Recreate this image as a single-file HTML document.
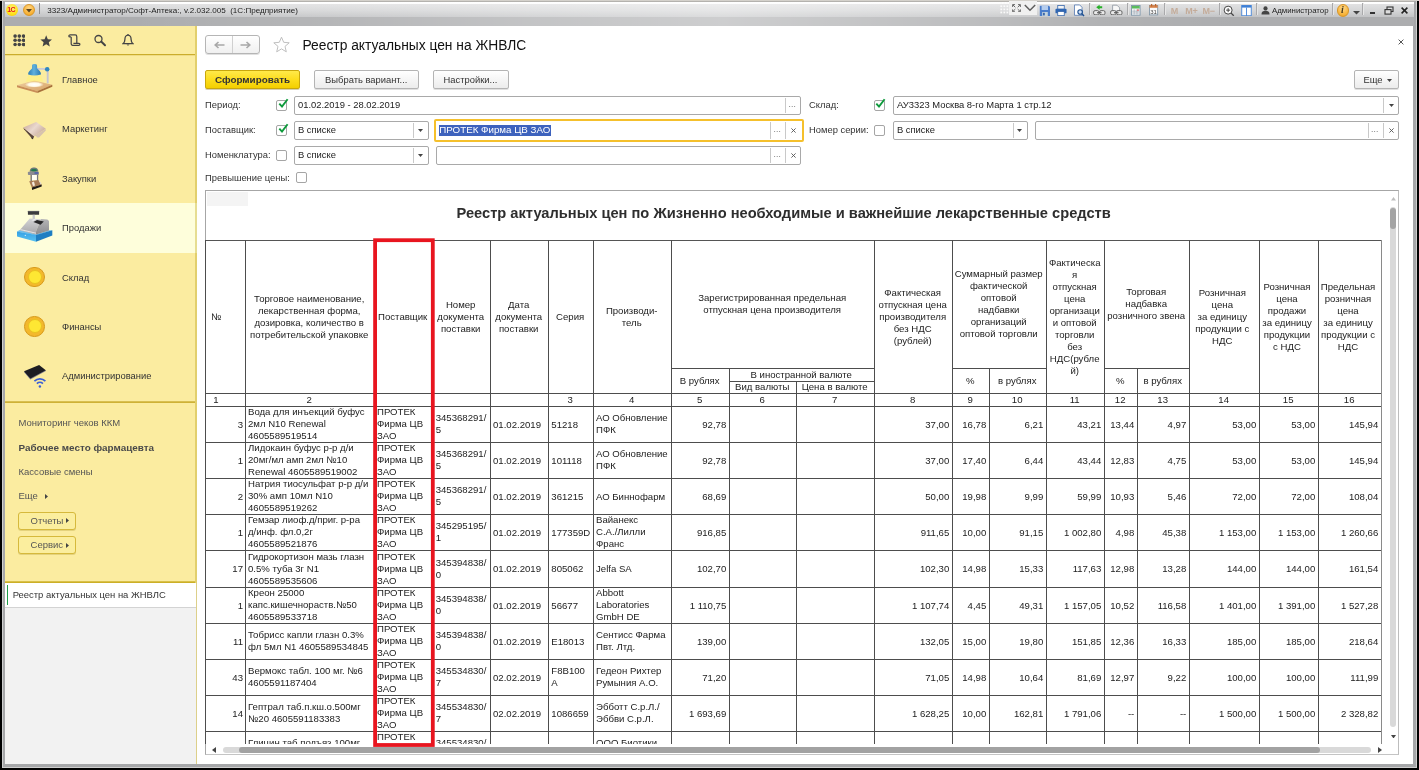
<!DOCTYPE html><html lang="ru"><head><meta charset="utf-8"><title>Реестр актуальных цен на ЖНВЛС</title><style>
*{box-sizing:border-box;margin:0;padding:0}
html,body{width:1419px;height:770px;overflow:hidden;background:#000}
html{background:linear-gradient(#d4d1cb 0,#d4d1cb 1px,#000 1px,#000 100%)}
body{filter:blur(0.4px)}
body{position:relative;font-family:"Liberation Sans",Arial,sans-serif;font-size:9.4px;color:#333;-webkit-font-smoothing:antialiased}
.a{position:absolute}
.t{position:absolute;white-space:pre;line-height:12px}
#frame{left:2px;top:0;width:1415px;height:768px;background:#a6a7a9;border:1px solid #cfcfcf;border-top:0}
#topstrip{left:0;top:0;width:1419px;height:1px;background:#d4d1cb}
#titlebar{left:5px;top:1px;width:1409px;height:25px;background:linear-gradient(#b4b2ae 0,#b4b2ae 1px,#fff 1px,#fdfdfd 3px,#e0e0e1 3.5px,#d6d7d8 9px,#c4c5c7 15.5px,#acadaf 16.5px,#acadaf 100%)}
#titleglow{left:5px;top:4px;width:1409px;height:22px;background:linear-gradient(90deg,rgba(255,255,255,0) 0,rgba(255,255,255,0) 9%,rgba(255,255,255,.12) 24%,rgba(255,255,255,.28) 37%,rgba(255,255,255,.4) 51%,rgba(255,255,255,.27) 63%,rgba(255,255,255,.19) 70%,rgba(255,255,255,.06) 78%,rgba(255,255,255,0) 88%)}
#side{left:5px;top:26px;width:192px;border-right:2px solid #e2cf6c;height:557px;background:#fbeca0}
#main{left:197px;top:26px;width:1216px;height:738px;background:#fff}
.sec{position:absolute;left:62px;font-size:9.4px;color:#333;white-space:pre;line-height:12px}
.cmd{position:absolute;left:18.5px;font-size:9.5px;color:#555;white-space:pre;line-height:12px}
.sbtn{position:absolute;left:18px;width:58px;height:18px;border:1px solid #d6b93c;border-radius:3px;background:#fbee9e;box-shadow:0 1px 0 rgba(160,130,20,.25)}
.lbl{position:absolute;font-size:9.4px;color:#333;white-space:pre;line-height:12px}
.inp{position:absolute;height:19px;border:1px solid #a9a9a9;border-radius:2px;background:#fff}
.inp .v{position:absolute;left:3px;top:2.2px;font-size:9.4px;line-height:12px;white-space:pre;color:#222}
.sepv{position:absolute;top:1px;bottom:1px;width:1px;background:#c9c9c9}
.cb{position:absolute;width:11px;height:11px;border:1px solid #a5a5a5;border-radius:2px;background:#fff}
.btn{position:absolute;height:19px;border:1px solid #b4b4b4;border-radius:2px;background:linear-gradient(#fff,#ececec);font-size:9.4px;color:#333;text-align:center;line-height:17px;white-space:pre;box-shadow:0 1px 0 rgba(0,0,0,.12)}
.hl{position:absolute;background:#333}
.c{position:absolute;font-size:9.6px;line-height:12px;color:#222;white-space:pre;display:flex;flex-direction:column;justify-content:center}
.c.ct{text-align:center;align-items:center}
.c.r{text-align:right;align-items:flex-end}
.c.l{text-align:left;align-items:flex-start}
</style></head><body>
<div class="a" id="frame"></div><div class="a" id="topstrip"></div><div class="a" id="titlebar"></div><div class="a" id="titleglow"></div>
<div class="a" id="side"></div><div class="a" id="main"></div>
<!-- title bar -->
<div class="a" style="left:6px;top:4px;width:12px;height:12px;border-radius:50%;background:radial-gradient(circle at 50% 35%,#fff27a,#ffe21a 60%,#f5c400)"></div>
<div class="t" style="left:7.2px;top:5px;font-size:7px;line-height:10px;font-weight:bold;color:#e3161b;letter-spacing:-0.6px">1С</div>
<div class="a" style="left:23px;top:4px;width:12px;height:12px;border-radius:50%;background:radial-gradient(circle at 50% 30%,#ffd684,#f8b133 70%,#e59a1b);border:0.5px solid #d9982a"></div>
<svg class="a" style="left:26px;top:8.5px" width="6" height="4" viewBox="0 0 6 4"><path d="M0 0H6L3 3.6Z" fill="#5a4520"/></svg>
<div class="a" style="left:39px;top:3px;width:1px;height:11px;background:#8e8e90"></div>
<div class="t" style="left:47.3px;top:4.5px;font-size:8.08px;color:#1c1c1c">3323/Администратор/Софт-Аптека:, v.2.032.005  (1С:Предприятие)</div>
<div class="a" style="left:1009px;top:1px;width:28px;height:14px;background:#f0f0f0"></div>
<svg class="a" style="left:1000px;top:1.6px" width="10" height="13" viewBox="0 0 10 13"><rect x="0.4" y="0.3" width="1.7" height="1.7" fill="#fafafa"/><rect x="0.4" y="3.4" width="1.7" height="1.7" fill="#fafafa"/><rect x="0.4" y="6.5" width="1.7" height="1.7" fill="#fafafa"/><rect x="0.4" y="9.600000000000001" width="1.7" height="1.7" fill="#fafafa"/><rect x="3.4499999999999997" y="0.3" width="1.7" height="1.7" fill="#fafafa"/><rect x="3.4499999999999997" y="3.4" width="1.7" height="1.7" fill="#fafafa"/><rect x="3.4499999999999997" y="6.5" width="1.7" height="1.7" fill="#fafafa"/><rect x="3.4499999999999997" y="9.600000000000001" width="1.7" height="1.7" fill="#fafafa"/><rect x="6.5" y="0.3" width="1.7" height="1.7" fill="#fafafa"/><rect x="6.5" y="3.4" width="1.7" height="1.7" fill="#fafafa"/><rect x="6.5" y="6.5" width="1.7" height="1.7" fill="#fafafa"/><rect x="6.5" y="9.600000000000001" width="1.7" height="1.7" fill="#fafafa"/></svg>
<svg class="a" style="left:1011.5px;top:3.8px" width="9" height="8.4" viewBox="0 0 9 8.4"><path d="M0.6 3V0.6H3M6 0.6H8.4V3M8.4 5.4V7.8H6M3 7.8H0.6V5.4M0.9 0.9L3.3 3.3M8.1 0.9L5.7 3.3M8.1 7.5L5.7 5.1M0.9 7.5L3.3 5.1" stroke="#6a6a6a" stroke-width="1" fill="none"/></svg>
<svg class="a" style="left:1023.7px;top:4.2px" width="12" height="7.5" viewBox="0 0 12 7.5"><path d="M0.8 1L6 6.2L11.2 1" stroke="#5e5e5e" stroke-width="1.5" fill="none"/></svg>
<svg class="a" style="left:1039px;top:4.6px" width="12" height="12" viewBox="0 0 12 12"><path d="M0.8 0.8H10L11 1.8V11H0.8Z" fill="#4a7dcb"/><rect x="2.6" y="0.8" width="6.4" height="4.2" fill="#b5cdee"/><rect x="3.2" y="7" width="5.6" height="4" fill="#c3d3dc"/><rect x="4" y="7.8" width="1.8" height="2.6" fill="#3b66aa"/></svg>
<svg class="a" style="left:1055.3px;top:4.8px" width="12" height="11.2" viewBox="0 0 13 12"><rect x="3" y="0.5" width="7" height="4" fill="#f4f4f4" stroke="#2c5fa8" stroke-width="0.8"/><rect x="0.5" y="4" width="12" height="5" rx="1" fill="#2f66b3"/><rect x="3" y="7" width="7" height="4.5" fill="#fff" stroke="#2c5fa8" stroke-width="0.8"/></svg>
<svg class="a" style="left:1073px;top:3.8px" width="12.4" height="13.2" viewBox="0 0 13 14"><path d="M1.5 1H7L9.5 3.5V12H1.5Z" fill="#fff" stroke="#5c7fb5" stroke-width="0.9"/><circle cx="7.5" cy="8.5" r="2.4" fill="#cfe0f7" stroke="#1d4f91" stroke-width="1.2"/><path d="M9.3 10.4L11.6 12.8" stroke="#1d4f91" stroke-width="1.6"/></svg>
<div class="a" style="left:1089px;top:3px;width:1px;height:12px;background:#a9a9ab"></div><div class="a" style="left:1090px;top:3px;width:1px;height:12px;background:#e6e6e6"></div>
<svg class="a" style="left:1093px;top:3.8px" width="12.6" height="11.4" viewBox="0 0 12.6 11.4"><path d="M3.2 3.3L6.6 0.8V2.3H9.2V4.3H6.6V5.8Z" fill="#27b027"/><rect x="0.6" y="6.6" width="5.4" height="4.2" rx="1.5" fill="#e9e9e9" stroke="#5a5a5a" stroke-width="0.9"/><rect x="6.6" y="6.6" width="5.4" height="4.2" rx="1.5" fill="#e9e9e9" stroke="#5a5a5a" stroke-width="0.9"/><path d="M4 8.7H8.6" stroke="#5a5a5a" stroke-width="1.1"/></svg>
<svg class="a" style="left:1110px;top:3.8px" width="12.6" height="11.4" viewBox="0 0 12.6 11.4"><path d="M2.6 1.2H7L9.6 3.8V7H2.6Z" fill="#f7f7f7" stroke="#8d95a0" stroke-width="0.8"/><rect x="0.6" y="6.6" width="5.4" height="4.2" rx="1.5" fill="#e9e9e9" stroke="#5a5a5a" stroke-width="0.9"/><rect x="6.6" y="6.6" width="5.4" height="4.2" rx="1.5" fill="#e9e9e9" stroke="#5a5a5a" stroke-width="0.9"/><path d="M4 8.7H8.6" stroke="#5a5a5a" stroke-width="1.1"/></svg>
<div class="a" style="left:1127px;top:3px;width:1px;height:12px;background:#a9a9ab"></div><div class="a" style="left:1128px;top:3px;width:1px;height:12px;background:#e6e6e6"></div>
<svg class="a" style="left:1131.3px;top:4.9px" width="9.6" height="10.7" viewBox="0 0 9.6 10.7"><rect x="0.5" y="0.5" width="8.6" height="9.7" fill="#f2f5f7" stroke="#7f97aa" stroke-width="0.9"/><rect x="0.9" y="0.9" width="7.8" height="2.6" fill="#5cbd5c"/><path d="M3.2 4.4V9.6M6 4.4V9.6M1.2 6.2H8.4M1.2 8H8.4" stroke="#a3adb5" stroke-width="0.7"/><rect x="6.3" y="4.3" width="1.4" height="1.6" fill="#e45a5a"/></svg>
<svg class="a" style="left:1149.2px;top:4.2px" width="9.4" height="11.4" viewBox="0 0 9.4 11.4"><rect x="0.5" y="1.5" width="8.2" height="9.4" fill="#fbfbfb" stroke="#8397a8" stroke-width="0.9"/><rect x="0.5" y="1.2" width="8.2" height="2.6" fill="#d8834a"/><rect x="2" y="0" width="1.2" height="2.4" fill="#b9662f"/><rect x="6" y="0" width="1.2" height="2.4" fill="#b9662f"/><text x="4.6" y="9.8" font-size="6" text-anchor="middle" fill="#444" font-family="Liberation Sans">31</text></svg>
<div class="a" style="left:1164px;top:3px;width:1px;height:12px;background:#a9a9ab"></div><div class="a" style="left:1165px;top:3px;width:1px;height:12px;background:#e6e6e6"></div>
<div class="t" style="left:1170.7px;top:4.5px;font-size:9px;font-weight:bold;color:#c4ac9a;letter-spacing:-0.3px">M</div>
<div class="t" style="left:1185.2px;top:4.5px;font-size:9px;font-weight:bold;color:#c4ac9a;letter-spacing:-0.3px">M+</div>
<div class="t" style="left:1202.6px;top:4.5px;font-size:9px;font-weight:bold;color:#c4ac9a;letter-spacing:-0.3px">M−</div>
<div class="a" style="left:1219px;top:3px;width:1px;height:12px;background:#a9a9ab"></div><div class="a" style="left:1220px;top:3px;width:1px;height:12px;background:#e6e6e6"></div>
<svg class="a" style="left:1223.3px;top:4.8px" width="11.6" height="11.6" viewBox="0 0 14 14"><circle cx="6.2" cy="6.2" r="4.8" fill="#fff" stroke="#444" stroke-width="1.2"/><path d="M3.8 6.2H8.6M6.2 3.8V8.6" stroke="#444" stroke-width="1.2"/><path d="M9.8 9.8L13 13" stroke="#444" stroke-width="1.6"/></svg>
<svg class="a" style="left:1241px;top:4.6px" width="11" height="11.2" viewBox="0 0 12 13"><rect x="0.5" y="0.5" width="11" height="12" fill="#fff" stroke="#3d7fd6" stroke-width="1"/><rect x="0.5" y="0.5" width="11" height="2.5" fill="#3d7fd6"/><path d="M6 3V12.5" stroke="#3d7fd6" stroke-width="1"/></svg>
<div class="a" style="left:1256px;top:3px;width:1px;height:12px;background:#a9a9ab"></div><div class="a" style="left:1257px;top:3px;width:1px;height:12px;background:#e6e6e6"></div>
<svg class="a" style="left:1261px;top:6px" width="9" height="9" viewBox="0 0 9 9"><circle cx="4.5" cy="2.4" r="2.1" fill="#444"/><path d="M0.5 8.5C0.5 5.5 2.2 4.8 4.5 4.8S8.5 5.5 8.5 8.5Z" fill="#444"/></svg>
<div class="t" style="left:1272px;top:4.5px;font-size:7.85px;color:#222">Администратор</div>
<div class="a" style="left:1332px;top:3px;width:1px;height:12px;background:#a9a9ab"></div><div class="a" style="left:1333px;top:3px;width:1px;height:12px;background:#e6e6e6"></div>
<div class="a" style="left:1336.5px;top:4px;width:12.5px;height:12.5px;border-radius:50%;background:radial-gradient(circle at 50% 30%,#ffd98a,#f7b236 70%,#e39a1d);border:0.5px solid #d8962a"></div>
<div class="t" style="left:1341px;top:4px;font-size:10px;font-weight:bold;font-style:italic;color:#4a3a1c;font-family:'Liberation Serif',serif">i</div>
<svg class="a" style="left:1353px;top:11px" width="7" height="4" viewBox="0 0 7 4"><path d="M0 0H7L3.5 3.5Z" fill="#444"/></svg>
<div class="a" style="left:1362px;top:3px;width:1px;height:12px;background:#a9a9ab"></div><div class="a" style="left:1363px;top:3px;width:1px;height:12px;background:#e6e6e6"></div>
<div class="a" style="left:1369.5px;top:12.3px;width:5px;height:1.6px;background:#333"></div>
<svg class="a" style="left:1383.5px;top:5.5px" width="10" height="9" viewBox="0 0 10 9"><rect x="3" y="1" width="6" height="4.5" fill="none" stroke="#333" stroke-width="1.1"/><rect x="1" y="3.6" width="6" height="4.5" fill="#ddd" stroke="#333" stroke-width="1.1"/></svg>
<svg class="a" style="left:1401px;top:7px" width="7" height="7" viewBox="0 0 7 7"><path d="M0.6 0.6L6.4 6.4M6.4 0.6L0.6 6.4" stroke="#222" stroke-width="1.5"/></svg>
<!-- sidebar -->
<svg class="a" style="left:12.7px;top:34.1px" width="12.6" height="12.6" viewBox="0 0 12.6 12.6"><circle cx="2.1" cy="2.1" r="1.8" fill="#454545"/><circle cx="2.1" cy="6.300000000000001" r="1.8" fill="#454545"/><circle cx="2.1" cy="10.5" r="1.8" fill="#454545"/><circle cx="6.300000000000001" cy="2.1" r="1.8" fill="#454545"/><circle cx="6.300000000000001" cy="6.300000000000001" r="1.8" fill="#454545"/><circle cx="6.300000000000001" cy="10.5" r="1.8" fill="#454545"/><circle cx="10.5" cy="2.1" r="1.8" fill="#454545"/><circle cx="10.5" cy="6.300000000000001" r="1.8" fill="#454545"/><circle cx="10.5" cy="10.5" r="1.8" fill="#454545"/></svg>
<svg class="a" style="left:39.9px;top:34.9px" width="12.4" height="11.8" viewBox="0 0 12 11.8"><path d="M6 0.3L7.6 4.3L11.8 4.6L8.6 7.3L9.6 11.5L6 9.2L2.4 11.5L3.4 7.3L0.2 4.6L4.4 4.3Z" fill="#454545"/></svg>
<svg class="a" style="left:67.8px;top:34px" width="13" height="12.4" viewBox="0 0 13 12.4"><path d="M1.6 1H7.2C8.4 1 8.8 1.8 8.8 2.8V9.3M3.2 3V9.8C3.2 10.9 3.8 11.4 4.8 11.4H10.4C11.5 11.4 11.9 10.8 11.9 10.2C11.9 9.6 11.5 9.3 10.9 9.3H5.4M1.6 1C0.6 1.3 0.6 3 1.8 3H3.2" stroke="#454545" stroke-width="1.25" fill="none"/></svg>
<svg class="a" style="left:94.4px;top:34.4px" width="13" height="13" viewBox="0 0 13 13"><circle cx="4.5" cy="5" r="3.5" fill="none" stroke="#454545" stroke-width="1.3"/><path d="M7.2 7.6L11 11.2" stroke="#454545" stroke-width="2" stroke-linecap="round"/></svg>
<svg class="a" style="left:122px;top:33.8px" width="12" height="13" viewBox="0 0 12 13"><path d="M6 1.2C3.6 1.2 2.9 3.2 2.9 5.4C2.9 7.6 2 8.8 1 9.7H11C10 8.8 9.1 7.6 9.1 5.4C9.1 3.2 8.4 1.2 6 1.2Z" fill="none" stroke="#454545" stroke-width="1.3"/><path d="M4.6 10.6A1.5 1.5 0 0 0 7.4 10.6Z" fill="#454545"/><rect x="5.4" y="0" width="1.2" height="1.6" fill="#454545"/></svg>
<div class="a" style="left:5px;top:54px;width:190px;height:1px;background:#cbad2c"></div><div class="a" style="left:5px;top:55px;width:190px;height:1px;background:#efdc86"></div>
<div class="a" style="left:5px;top:203px;width:190px;height:50px;background:#fefedb"></div><div class="a" style="left:195px;top:203px;width:2px;height:50px;background:#e6dd92"></div>
<div class="sec" style="top:73.9px">Главное</div>
<div class="sec" style="top:123.3px">Маркетинг</div>
<div class="sec" style="top:172.6px">Закупки</div>
<div class="sec" style="top:222.3px">Продажи</div>
<div class="sec" style="top:271.6px">Склад</div>
<div class="sec" style="top:321.1px">Финансы</div>
<div class="sec" style="top:370.3px">Администрирование</div>
<svg class="a" style="left:10px;top:58px" width="60" height="40" viewBox="0 0 60 40"><defs><linearGradient id="wd" x1="0" y1="0" x2="1" y2="1"><stop offset="0" stop-color="#efcf9f"/><stop offset="1" stop-color="#d6a267"/></linearGradient>
<linearGradient id="lh" x1="0" y1="0" x2="1" y2="0"><stop offset="0" stop-color="#2d7db6"/><stop offset=".45" stop-color="#5fb0dc"/><stop offset="1" stop-color="#2a78b0"/></linearGradient>
<radialGradient id="pp" cx=".5" cy=".5" r=".5"><stop offset="0" stop-color="#fff"/><stop offset=".6" stop-color="#fffbe8"/><stop offset="1" stop-color="#fffbe8" stop-opacity="0"/></radialGradient></defs>
<path d="M7 27.3L24.4 22.6L42.3 26.8L27.5 33Z" fill="url(#wd)"/><path d="M7 27.3L27.5 33V34.9L7 29.2Z" fill="#c98d58"/><path d="M27.5 33L42.3 26.8V28.7L27.5 34.9Z" fill="#a8703b"/>
<ellipse cx="24.3" cy="26.6" rx="9.5" ry="3" fill="url(#pp)"/>
<path d="M18.2 17.3H30.9L33.2 23.6H15.8Z" fill="#fff27a" opacity=".6"/>
<path d="M27 10.9H36.6" stroke="#c9c9d8" stroke-width="1.7"/><path d="M37.7 12.5V25.3" stroke="#c4c4d0" stroke-width="1.9"/><circle cx="37.2" cy="11.2" r="2.25" fill="#2f86c0"/>
<path d="M22.1 7.2Q22.1 6.1 24.5 6Q27 6.1 27 7.2L27.2 10.4C29 12 30.9 13.4 30.9 15.6V16.6Q24.5 18.6 18.2 16.6V15.6C18.2 13.4 20.4 12 22 10.4Z" fill="url(#lh)"/></svg>
<svg class="a" style="left:10px;top:112px" width="60" height="40" viewBox="0 0 60 40"><defs><linearGradient id="mk" x1="0" y1="0" x2="1" y2="0.6"><stop offset="0" stop-color="#c6a493"/><stop offset=".55" stop-color="#ead9cf"/><stop offset="1" stop-color="#c9ac9c"/></linearGradient></defs>
<path d="M13.2 15.6L14 17.3L21.8 26.2L22.9 27L24.2 24.6Z" fill="#5a463d"/>
<path d="M23.9 24L35.8 17V18.4L29.1 25.5H27L26 23.9Z" fill="#d6c2ae"/>
<path d="M13.2 15.6L26.2 9.9L35.8 16.8L23.9 24.2Z" fill="url(#mk)"/>
<path d="M21.6 25.2L23.4 26.9L22.7 27.3L21.4 26.2Z" fill="#222"/></svg>
<svg class="a" style="left:10px;top:160px" width="60" height="40" viewBox="0 0 60 40"><path d="M19.7 11.8C19.7 8.6 21.6 7.6 24 7.6S28.3 8.6 28.3 11.8Z" fill="#6c7a78"/><ellipse cx="24" cy="10.3" rx="2.9" ry="1.3" fill="#1f7a4f"/>
<rect x="17.9" y="11.7" width="11" height="3.3" rx="0.8" fill="#8b8b92"/><rect x="24.5" y="12.2" width="3.8" height="1.6" fill="#4a5fb0"/>
<rect x="20.5" y="15" width="1.4" height="6" fill="#77777f"/><rect x="26.8" y="15" width="1.4" height="6" fill="#77777f"/><rect x="22" y="15" width="4.8" height="5.4" fill="#fffef6"/>
<path d="M19.2 21.2L28.5 20L31.7 24.4L21.8 27.6Z" fill="#a77a55"/><path d="M21.8 22.6L24 21.4L25 25.4L23 26Z" fill="#f3e9dc"/><path d="M28.6 20.2L29.6 20.6L31.6 24.2L30.6 24.4Z" fill="#e8e4dc"/>
<path d="M21.8 27.6L31.7 24.4V26.6L22.1 30Z" fill="#1f1a17"/></svg>
<svg class="a" style="left:10px;top:206px" width="60" height="40" viewBox="0 0 60 40"><defs><linearGradient id="cr" x1="0" y1="0" x2="0" y2="1"><stop offset="0" stop-color="#d4d4d6"/><stop offset="1" stop-color="#a5a5a8"/></linearGradient><linearGradient id="cs" x1="0" y1="0" x2="0" y2="1"><stop offset="0" stop-color="#b4b4b6"/><stop offset="1" stop-color="#8b8b8e"/></linearGradient>
<linearGradient id="bl" x1="0" y1="0" x2="0" y2="1"><stop offset="0" stop-color="#35a0e4"/><stop offset="1" stop-color="#58c2f1"/></linearGradient></defs>
<rect x="17.9" y="4.9" width="11.2" height="3.9" rx="0.5" fill="#3b3b3e"/><rect x="17.9" y="4.9" width="11.2" height="1" fill="#5a5a5e"/><rect x="22.6" y="8.8" width="2.3" height="4.6" fill="#c9c9cc"/>
<path d="M7 25.5L9.9 24L26 28.3L39 24.2L42.3 24.2L26 29.4Z" fill="#6cc0f0"/>
<path d="M7 25.5L26 29.1V35.8L7 30.6Z" fill="url(#bl)"/><path d="M26 29.1L42.3 24.2V29.6L26 35.8Z" fill="#1e7ec2"/><circle cx="15.3" cy="29.4" r="0.6" fill="#d9eefb"/>
<path d="M9.9 23.9L19.7 12.5L31.2 13.3L26 25.2L26 28.6L9.9 24.6Z" fill="url(#cr)"/><path d="M31.2 13.1L37.4 13.5L39 15.1V24.4L26 28.6V25.2Z" fill="url(#cs)"/>
<path d="M10.4 23.6L26 27.2" stroke="#e9e9eb" stroke-width="0.9"/>
<path d="M23.4 16.1L27 14L33.8 15.6L30.6 18.7Z" fill="#28282a"/><path d="M21.5 14.2L24.5 12.9L26.5 13.2L23.4 14.8Z" fill="#ececee"/></svg>
<div class="a" style="left:24.4px;top:266.9px;width:20.6px;height:20.6px;border-radius:50%;background:#f3b82c;border:0.6px solid #d79a1c"></div>
<div class="a" style="left:27.7px;top:270.2px;width:14px;height:14px;border-radius:50%;background:#fee733;border:0.6px solid #e9c11f"></div>
<div class="a" style="left:24.4px;top:316.1px;width:20.6px;height:20.6px;border-radius:50%;background:#f3b82c;border:0.6px solid #d79a1c"></div>
<div class="a" style="left:27.7px;top:319.4px;width:14px;height:14px;border-radius:50%;background:#fee733;border:0.6px solid #e9c11f"></div>
<svg class="a" style="left:10px;top:356px" width="60" height="40" viewBox="0 0 60 40"><path d="M14 16.1L20.3 23.4L35.8 15.1L35.8 14.3Z" fill="#7b7c8e"/><path d="M14 15.3L29.1 9.1L35.8 14.3L20.3 22.6Z" fill="#1d1d22"/>
<path d="M24.4 25.1A7.8 7.8 0 0 1 35.4 25.1" stroke="#3c5fd6" stroke-width="1.7" fill="none"/><path d="M26.9 27.6A4.3 4.3 0 0 1 32.9 27.6" stroke="#3c5fd6" stroke-width="1.7" fill="none"/><circle cx="29.9" cy="30.5" r="1.2" fill="#3c5fd6"/></svg>
<div class="a" style="left:5px;top:401px;width:190px;height:1px;background:#d8bf52"></div><div class="a" style="left:5px;top:402px;width:190px;height:1px;background:#ceb136"></div>
<div class="cmd" style="top:417.2px">Мониторинг чеков ККМ</div>
<div class="cmd" style="top:441.5px;font-weight:bold;font-size:9.9px;color:#4a4a4a">Рабочее место фармацевта</div>
<div class="cmd" style="top:465.8px">Кассовые смены</div>
<div class="cmd" style="top:490px">Еще</div>
<svg class="a" style="left:44.5px;top:493.5px" width="3" height="5" viewBox="0 0 3 5"><path d="M0 0L3 2.5L0 5Z" fill="#444"/></svg>
<div class="sbtn" style="top:511.5px"></div>
<div class="cmd" style="left:30.6px;top:514.5px">Отчеты</div>
<svg class="a" style="left:66.3px;top:518.0px" width="3" height="5" viewBox="0 0 3 5"><path d="M0 0L3 2.5L0 5Z" fill="#444"/></svg>
<div class="sbtn" style="top:536px"></div>
<div class="cmd" style="left:30.6px;top:539.0px">Сервис</div>
<svg class="a" style="left:66.3px;top:542.5px" width="3" height="5" viewBox="0 0 3 5"><path d="M0 0L3 2.5L0 5Z" fill="#444"/></svg>
<div class="a" style="left:5px;top:581px;width:190px;height:2px;background:linear-gradient(#e0c95c,#c5a614)"></div>
<div class="a" style="left:5px;top:583px;width:192px;height:181px;background:#f2f2f2;border-right:1px solid #ddd08a"></div>
<div class="a" style="left:5px;top:583px;width:191px;height:25px;background:#fff;border-bottom:1px solid #d3d3d3"></div>
<div class="a" style="left:6.5px;top:585px;width:1.5px;height:20px;background:#1e9e4a"></div>
<div class="t" style="left:12.7px;top:589.3px;font-size:9.45px;color:#333">Реестр актуальных цен на ЖНВЛС</div>
<!-- main header -->
<div class="a" style="left:205px;top:35px;width:55px;height:18.5px;border:1px solid #b5b5b5;border-radius:3px;background:linear-gradient(#fff,#f0f0f0);box-shadow:0 1px 0 rgba(0,0,0,.12)"></div>
<div class="a" style="left:232px;top:36px;width:1px;height:16.5px;background:#d0d0d0"></div>
<svg class="a" style="left:213.5px;top:40.5px" width="11" height="8" viewBox="0 0 11 8"><path d="M10.5 4H1.5M4.5 1L1.2 4L4.5 7" stroke="#a8a8a8" stroke-width="1.6" fill="none"/></svg>
<svg class="a" style="left:240px;top:40.5px" width="11" height="8" viewBox="0 0 11 8"><path d="M0.5 4H9.5M6.5 1L9.8 4L6.5 7" stroke="#a8a8a8" stroke-width="1.6" fill="none"/></svg>
<svg class="a" style="left:273px;top:36px" width="17" height="17" viewBox="0 0 17 17"><path d="M8.5 1.2L10.7 6.3L16.2 6.8L12 10.4L13.3 15.8L8.5 12.9L3.7 15.8L5 10.4L0.8 6.8L6.3 6.3Z" fill="#fff" stroke="#b9b9b9" stroke-width="0.9"/></svg>
<div class="t" style="left:302.5px;top:36.5px;font-size:13.8px;line-height:17px;color:#111">Реестр актуальных цен на ЖНВЛС</div>
<svg class="a" style="left:1397.5px;top:39.2px" width="6" height="6" viewBox="0 0 6 6"><path d="M0.6 0.6L5.4 5.4M5.4 0.6L0.6 5.4" stroke="#555" stroke-width="1"/></svg>
<div class="btn" style="left:205px;top:70px;width:95px;border-color:#c9a70c;background:linear-gradient(#ffe94a,#fcdc1a 55%,#f3cf00);font-weight:bold;color:#333;font-size:9.9px;box-shadow:0 1px 0 rgba(120,100,0,.3)">Сформировать</div>
<div class="btn" style="left:314px;top:70px;width:104.5px">Выбрать вариант...</div>
<div class="btn" style="left:432.5px;top:70px;width:76px">Настройки...</div>
<div class="btn" style="left:1354px;top:70px;width:45px;text-align:left;padding-left:8.5px">Еще</div>
<svg class="a" style="left:1387px;top:78.5px" width="5" height="3" viewBox="0 0 5 3"><path d="M0 0H5L2.5 3Z" fill="#444"/></svg>
<div class="lbl" style="left:205px;top:99px">Период:</div>
<div class="cb" style="left:276px;top:99.5px"></div>
<svg class="a" style="left:277.5px;top:98.0px" width="11" height="11" viewBox="0 0 11 11"><path d="M1.3 5.6L4 8.6L9.6 1.2" stroke="#0e9a3c" stroke-width="1.9" fill="none"/></svg>
<div class="inp" style="left:294px;top:96px;width:507px;"><span class="v">01.02.2019 - 28.02.2019</span><span class="sepv" style="left:490px"></span></div>
<div class="t" style="left:788.5px;top:98.0px;font-size:8.5px;color:#777;letter-spacing:0.2px">...</div>
<div class="lbl" style="left:809px;top:99px">Склад:</div>
<div class="cb" style="left:873.5px;top:99.5px"></div>
<svg class="a" style="left:875.0px;top:98.0px" width="11" height="11" viewBox="0 0 11 11"><path d="M1.3 5.6L4 8.6L9.6 1.2" stroke="#0e9a3c" stroke-width="1.9" fill="none"/></svg>
<div class="inp" style="left:893px;top:96px;width:506px;"><span class="v">АУ3323 Москва 8-го Марта 1 стр.12</span><span class="sepv" style="left:489px"></span></div>
<svg class="a" style="left:1388.5px;top:104.0px" width="5" height="3" viewBox="0 0 5 3"><path d="M0 0H5L2.5 3Z" fill="#444"/></svg>
<div class="lbl" style="left:205px;top:124px">Поставщик:</div>
<div class="cb" style="left:276px;top:124.5px"></div>
<svg class="a" style="left:277.5px;top:123.0px" width="11" height="11" viewBox="0 0 11 11"><path d="M1.3 5.6L4 8.6L9.6 1.2" stroke="#0e9a3c" stroke-width="1.9" fill="none"/></svg>
<div class="inp" style="left:294px;top:121px;width:134.5px;"><span class="v">В списке</span><span class="sepv" style="left:118px"></span></div>
<svg class="a" style="left:418.0px;top:129.0px" width="5" height="3" viewBox="0 0 5 3"><path d="M0 0H5L2.5 3Z" fill="#444"/></svg>
<div class="a" style="left:434px;top:119px;width:370px;height:23px;border:2px solid #f5c02c;border-radius:2px;background:#fff"></div>
<div class="a" style="left:770px;top:122px;width:1px;height:17px;background:#c9c9c9"></div><div class="a" style="left:785px;top:122px;width:1px;height:17px;background:#c9c9c9"></div>
<div class="a" style="left:438.6px;top:125px;width:112.5px;height:11px;background:#3d62bd"></div>
<div class="t" style="left:439.3px;top:124.3px;font-size:9.75px;color:#fff">ПРОТЕК Фирма ЦВ ЗАО</div>
<div class="t" style="left:773.5px;top:123.0px;font-size:8.5px;color:#777;letter-spacing:0.2px">...</div>
<svg class="a" style="left:790.5px;top:128.0px" width="5" height="5" viewBox="0 0 5 5"><path d="M0.4 0.4L4.6 4.6M4.6 0.4L0.4 4.6" stroke="#555" stroke-width="0.9"/></svg>
<div class="lbl" style="left:809px;top:124px">Номер серии:</div>
<div class="cb" style="left:873.5px;top:124.5px"></div>
<div class="inp" style="left:893px;top:121px;width:134.5px;"><span class="v">В списке</span><span class="sepv" style="left:118.5px"></span></div>
<svg class="a" style="left:1017.0px;top:129.0px" width="5" height="3" viewBox="0 0 5 3"><path d="M0 0H5L2.5 3Z" fill="#444"/></svg>
<div class="inp" style="left:1034.5px;top:121px;width:364.5px;"><span class="sepv" style="left:332.0px"></span><span class="sepv" style="left:347.5px"></span></div>
<div class="t" style="left:1371.0px;top:123.0px;font-size:8.5px;color:#777;letter-spacing:0.2px">...</div>
<svg class="a" style="left:1388.5px;top:128.0px" width="5" height="5" viewBox="0 0 5 5"><path d="M0.4 0.4L4.6 4.6M4.6 0.4L0.4 4.6" stroke="#555" stroke-width="0.9"/></svg>
<div class="lbl" style="left:205px;top:149px">Номенклатура:</div>
<div class="cb" style="left:276px;top:149.5px"></div>
<div class="inp" style="left:294px;top:146px;width:134.5px;"><span class="v">В списке</span><span class="sepv" style="left:118px"></span></div>
<svg class="a" style="left:418.0px;top:154.0px" width="5" height="3" viewBox="0 0 5 3"><path d="M0 0H5L2.5 3Z" fill="#444"/></svg>
<div class="inp" style="left:436px;top:146px;width:365px;"><span class="sepv" style="left:333px"></span><span class="sepv" style="left:348px"></span></div>
<div class="t" style="left:773.5px;top:148.0px;font-size:8.5px;color:#777;letter-spacing:0.2px">...</div>
<svg class="a" style="left:790.5px;top:153.0px" width="5" height="5" viewBox="0 0 5 5"><path d="M0.4 0.4L4.6 4.6M4.6 0.4L0.4 4.6" stroke="#555" stroke-width="0.9"/></svg>
<div class="lbl" style="left:205px;top:171.5px">Превышение цены:</div>
<div class="cb" style="left:295.5px;top:172px"></div>
<!-- spreadsheet -->
<div class="a" style="left:205px;top:190px;width:1194px;height:565px;border:1px solid #a6a6a6;border-right-color:#bdbdbd;border-bottom-color:#c4c4c4;background:#fff"></div>
<div class="a" style="left:207px;top:192px;width:41px;height:13.5px;background:#f4f4f4"></div>
<div class="t" style="left:456.5px;top:204px;font-size:14.67px;line-height:18px;font-weight:bold;color:#2e2e2e">Реестр актуальных цен по Жизненно необходимые и важнейшие лекарственные средств</div>
<div class="a" id="grid" style="left:205px;top:236px;width:1180px;height:508px;overflow:hidden">
<i class="hl" style="left:0px;top:4px;width:1177px;height:1px;background:#555"></i>
<i class="hl" style="left:0px;top:157px;width:1177px;height:1px;background:#4d4d4d"></i>
<i class="hl" style="left:0px;top:170px;width:1177px;height:1px;background:#4d4d4d"></i>
<i class="hl" style="left:0px;top:206px;width:1177px;height:1px;background:#4d4d4d"></i>
<i class="hl" style="left:0px;top:242px;width:1177px;height:1px;background:#4d4d4d"></i>
<i class="hl" style="left:0px;top:278px;width:1177px;height:1px;background:#4d4d4d"></i>
<i class="hl" style="left:0px;top:314px;width:1177px;height:1px;background:#4d4d4d"></i>
<i class="hl" style="left:0px;top:351px;width:1177px;height:1px;background:#4d4d4d"></i>
<i class="hl" style="left:0px;top:387px;width:1177px;height:1px;background:#4d4d4d"></i>
<i class="hl" style="left:0px;top:423px;width:1177px;height:1px;background:#4d4d4d"></i>
<i class="hl" style="left:0px;top:459px;width:1177px;height:1px;background:#4d4d4d"></i>
<i class="hl" style="left:0px;top:495px;width:1177px;height:1px;background:#4d4d4d"></i>
<i class="hl" style="left:0px;top:531px;width:1177px;height:1px;background:#4d4d4d"></i>
<i class="hl" style="left:466px;top:132px;width:204px;height:1px;background:#4d4d4d"></i>
<i class="hl" style="left:524px;top:145px;width:146px;height:1px;background:#4d4d4d"></i>
<i class="hl" style="left:747px;top:132px;width:95px;height:1px;background:#4d4d4d"></i>
<i class="hl" style="left:899px;top:132px;width:86px;height:1px;background:#4d4d4d"></i>
<i class="hl" style="left:0px;top:4px;width:1px;height:541px;background:#4d4d4d"></i>
<i class="hl" style="left:40px;top:4px;width:1px;height:541px;background:#4d4d4d"></i>
<i class="hl" style="left:169px;top:4px;width:1px;height:541px;background:#4d4d4d"></i>
<i class="hl" style="left:227px;top:4px;width:1px;height:541px;background:#4d4d4d"></i>
<i class="hl" style="left:285px;top:4px;width:1px;height:541px;background:#4d4d4d"></i>
<i class="hl" style="left:343px;top:4px;width:1px;height:541px;background:#4d4d4d"></i>
<i class="hl" style="left:388px;top:4px;width:1px;height:541px;background:#4d4d4d"></i>
<i class="hl" style="left:466px;top:4px;width:1px;height:541px;background:#4d4d4d"></i>
<i class="hl" style="left:669px;top:4px;width:1px;height:541px;background:#4d4d4d"></i>
<i class="hl" style="left:747px;top:4px;width:1px;height:541px;background:#4d4d4d"></i>
<i class="hl" style="left:841px;top:4px;width:1px;height:541px;background:#4d4d4d"></i>
<i class="hl" style="left:899px;top:4px;width:1px;height:541px;background:#4d4d4d"></i>
<i class="hl" style="left:984px;top:4px;width:1px;height:541px;background:#4d4d4d"></i>
<i class="hl" style="left:1054px;top:4px;width:1px;height:541px;background:#4d4d4d"></i>
<i class="hl" style="left:1113px;top:4px;width:1px;height:541px;background:#4d4d4d"></i>
<i class="hl" style="left:1176px;top:4px;width:1px;height:541px;background:#8a8a8a"></i>
<i class="hl" style="left:524px;top:132px;width:1px;height:413px;background:#4d4d4d"></i>
<i class="hl" style="left:591px;top:145px;width:1px;height:400px;background:#4d4d4d"></i>
<i class="hl" style="left:784px;top:132px;width:1px;height:413px;background:#4d4d4d"></i>
<i class="hl" style="left:932px;top:132px;width:1px;height:413px;background:#4d4d4d"></i>
<div class="c l" style="left:6px;top:4.5px;width:29px;height:152px">№</div>
<div class="c ct" style="left:42.19999999999999px;top:4.5px;width:124.0px;height:152px">Торговое наименование,
лекарственная форма,
дозировка, количество в
потребительской упаковке</div>
<div class="c ct" style="left:171.2px;top:4.5px;width:53.0px;height:152px">Поставщик</div>
<div class="c ct" style="left:229.2px;top:4.5px;width:53.0px;height:152px">Номер
документа
поставки</div>
<div class="c ct" style="left:287.2px;top:4.5px;width:53.00000000000006px;height:152px">Дата
документа
поставки</div>
<div class="c ct" style="left:345.20000000000005px;top:4.5px;width:40.0px;height:152px">Серия</div>
<div class="c ct" style="left:390.20000000000005px;top:4.5px;width:73.0px;height:152px">Производи-
тель</div>
<div class="c ct" style="left:468.20000000000005px;top:4.5px;width:198.0px;height:127px">Зарегистрированная предельная
отпускная цена производителя</div>
<div class="c ct" style="left:468.20000000000005px;top:132.5px;width:53.0px;height:24px">В рублях</div>
<div class="c ct" style="left:526.2px;top:132.5px;width:140.0px;height:12px">В иностранной валюте</div>
<div class="c ct" style="left:526.2px;top:145.5px;width:62.0px;height:11px">Вид валюты</div>
<div class="c ct" style="left:593.2px;top:145.5px;width:73.0px;height:11px">Цена в валюте</div>
<div class="c ct" style="left:671.2px;top:4.5px;width:73.0px;height:152px">Фактическая
отпускная цена
производителя
без НДС
(рублей)</div>
<div class="c ct" style="left:749.2px;top:4.5px;width:89.0px;height:127px">Суммарный размер
фактической
оптовой
надбавки
организаций
оптовой торговли</div>
<div class="c ct" style="left:749.2px;top:132.5px;width:32.0px;height:24px">%</div>
<div class="c ct" style="left:786.2px;top:132.5px;width:52.0px;height:24px">в рублях</div>
<div class="c ct" style="left:843.2px;top:5px;width:53.0px;height:152px">Фактическа
я
отпускная
цена
организаци
и оптовой
торговли
без
НДС(рубле
й)</div>
<div class="c ct" style="left:901.2px;top:4.5px;width:80.0px;height:127px">Торговая
надбавка
розничного звена</div>
<div class="c ct" style="left:901.2px;top:132.5px;width:28.0px;height:24px">%</div>
<div class="c ct" style="left:934.2px;top:132.5px;width:47.0px;height:24px">в рублях</div>
<div class="c ct" style="left:984.8px;top:4.5px;width:65.0px;height:152px">Розничная
цена
за единицу
продукции с
НДС</div>
<div class="c ct" style="left:1055px;top:4.5px;width:54px;height:152px">Розничная
цена
продажи
за единицу
продукции
с НДС</div>
<div class="c ct" style="left:1114px;top:4.5px;width:58px;height:152px">Предельная
розничная
цена
за единицу
продукции с
НДС</div>
<div class="c ct" style="left:-6.5px;top:157.5px;width:35.0px;height:12px">1</div>
<div class="c ct" style="left:42.19999999999999px;top:157.5px;width:124.0px;height:12px">2</div>
<div class="c ct" style="left:345.20000000000005px;top:157.5px;width:40.0px;height:12px">3</div>
<div class="c ct" style="left:390.20000000000005px;top:157.5px;width:73.0px;height:12px">4</div>
<div class="c ct" style="left:468.20000000000005px;top:157.5px;width:53.0px;height:12px">5</div>
<div class="c ct" style="left:526.2px;top:157.5px;width:62.0px;height:12px">6</div>
<div class="c ct" style="left:593.2px;top:157.5px;width:73.0px;height:12px">7</div>
<div class="c ct" style="left:671.2px;top:157.5px;width:73.0px;height:12px">8</div>
<div class="c ct" style="left:749.2px;top:157.5px;width:32.0px;height:12px">9</div>
<div class="c ct" style="left:786.2px;top:157.5px;width:52.0px;height:12px">10</div>
<div class="c ct" style="left:843.2px;top:157.5px;width:53.0px;height:12px">11</div>
<div class="c ct" style="left:901.2px;top:157.5px;width:28.0px;height:12px">12</div>
<div class="c ct" style="left:934.2px;top:157.5px;width:47.0px;height:12px">13</div>
<div class="c ct" style="left:986.2px;top:157.5px;width:65.0px;height:12px">14</div>
<div class="c ct" style="left:1056.2px;top:157.5px;width:54.0px;height:12px">15</div>
<div class="c ct" style="left:1115.2px;top:157.5px;width:58.0px;height:12px">16</div>
<div class="c r" style="left:3px;top:171px;width:35px;height:35px">3</div>
<div class="c l" style="left:43px;top:170.5px;width:124px;height:35px">Вода для инъекций буфус
2мл N10 Renewal
4605589519514</div>
<div class="c l" style="left:172px;top:170.5px;width:53px;height:35px">ПРОТЕК
Фирма ЦВ
ЗАО</div>
<div class="c l" style="left:230.7px;top:170.5px;width:51.6px;height:35px">345368291/
5</div>
<div class="c l" style="left:288px;top:171px;width:53px;height:35px">01.02.2019</div>
<div class="c l" style="left:346.3px;top:171px;width:39.4px;height:35px">51218</div>
<div class="c l" style="left:391px;top:170.5px;width:73px;height:35px">АО Обновление
ПФК</div>
<div class="c r" style="left:469.7px;top:171px;width:51.6px;height:35px">92,78</div>
<div class="c r" style="left:672.7px;top:171px;width:71.6px;height:35px">37,00</div>
<div class="c r" style="left:750.7px;top:171px;width:30.6px;height:35px">16,78</div>
<div class="c r" style="left:787.7px;top:171px;width:50.6px;height:35px">6,21</div>
<div class="c r" style="left:844.7px;top:171px;width:51.6px;height:35px">43,21</div>
<div class="c r" style="left:902.7px;top:171px;width:26.6px;height:35px">13,44</div>
<div class="c r" style="left:935.7px;top:171px;width:45.6px;height:35px">4,97</div>
<div class="c r" style="left:987.7px;top:171px;width:63.6px;height:35px">53,00</div>
<div class="c r" style="left:1057.7px;top:171px;width:52.6px;height:35px">53,00</div>
<div class="c r" style="left:1116.7px;top:171px;width:56.6px;height:35px">145,94</div>
<div class="c r" style="left:3px;top:207px;width:35px;height:35px">1</div>
<div class="c l" style="left:43px;top:206.5px;width:124px;height:35px">Лидокаин буфус р-р д/и
20мг/мл амп 2мл №10
Renewal 4605589519002</div>
<div class="c l" style="left:172px;top:206.5px;width:53px;height:35px">ПРОТЕК
Фирма ЦВ
ЗАО</div>
<div class="c l" style="left:230.7px;top:206.5px;width:51.6px;height:35px">345368291/
5</div>
<div class="c l" style="left:288px;top:207px;width:53px;height:35px">01.02.2019</div>
<div class="c l" style="left:346.3px;top:207px;width:39.4px;height:35px">101118</div>
<div class="c l" style="left:391px;top:206.5px;width:73px;height:35px">АО Обновление
ПФК</div>
<div class="c r" style="left:469.7px;top:207px;width:51.6px;height:35px">92,78</div>
<div class="c r" style="left:672.7px;top:207px;width:71.6px;height:35px">37,00</div>
<div class="c r" style="left:750.7px;top:207px;width:30.6px;height:35px">17,40</div>
<div class="c r" style="left:787.7px;top:207px;width:50.6px;height:35px">6,44</div>
<div class="c r" style="left:844.7px;top:207px;width:51.6px;height:35px">43,44</div>
<div class="c r" style="left:902.7px;top:207px;width:26.6px;height:35px">12,83</div>
<div class="c r" style="left:935.7px;top:207px;width:45.6px;height:35px">4,75</div>
<div class="c r" style="left:987.7px;top:207px;width:63.6px;height:35px">53,00</div>
<div class="c r" style="left:1057.7px;top:207px;width:52.6px;height:35px">53,00</div>
<div class="c r" style="left:1116.7px;top:207px;width:56.6px;height:35px">145,94</div>
<div class="c r" style="left:3px;top:243px;width:35px;height:35px">2</div>
<div class="c l" style="left:43px;top:242.5px;width:124px;height:35px">Натрия тиосульфат р-р д/и
30% амп 10мл N10
4605589519262</div>
<div class="c l" style="left:172px;top:242.5px;width:53px;height:35px">ПРОТЕК
Фирма ЦВ
ЗАО</div>
<div class="c l" style="left:230.7px;top:242.5px;width:51.6px;height:35px">345368291/
5</div>
<div class="c l" style="left:288px;top:243px;width:53px;height:35px">01.02.2019</div>
<div class="c l" style="left:346.3px;top:243px;width:39.4px;height:35px">361215</div>
<div class="c l" style="left:391px;top:243px;width:73px;height:35px">АО Биннофарм</div>
<div class="c r" style="left:469.7px;top:243px;width:51.6px;height:35px">68,69</div>
<div class="c r" style="left:672.7px;top:243px;width:71.6px;height:35px">50,00</div>
<div class="c r" style="left:750.7px;top:243px;width:30.6px;height:35px">19,98</div>
<div class="c r" style="left:787.7px;top:243px;width:50.6px;height:35px">9,99</div>
<div class="c r" style="left:844.7px;top:243px;width:51.6px;height:35px">59,99</div>
<div class="c r" style="left:902.7px;top:243px;width:26.6px;height:35px">10,93</div>
<div class="c r" style="left:935.7px;top:243px;width:45.6px;height:35px">5,46</div>
<div class="c r" style="left:987.7px;top:243px;width:63.6px;height:35px">72,00</div>
<div class="c r" style="left:1057.7px;top:243px;width:52.6px;height:35px">72,00</div>
<div class="c r" style="left:1116.7px;top:243px;width:56.6px;height:35px">108,04</div>
<div class="c r" style="left:3px;top:279px;width:35px;height:35px">1</div>
<div class="c l" style="left:43px;top:278.5px;width:124px;height:35px">Гемзар лиоф.д/приг. р-ра
д/инф. фл.0,2г
4605589521876</div>
<div class="c l" style="left:172px;top:278.5px;width:53px;height:35px">ПРОТЕК
Фирма ЦВ
ЗАО</div>
<div class="c l" style="left:230.7px;top:278.5px;width:51.6px;height:35px">345295195/
1</div>
<div class="c l" style="left:288px;top:279px;width:53px;height:35px">01.02.2019</div>
<div class="c l" style="left:346.3px;top:279px;width:39.4px;height:35px">177359D</div>
<div class="c l" style="left:391px;top:278.5px;width:73px;height:35px">Вайанекс
С.А./Лилли
Франс</div>
<div class="c r" style="left:469.7px;top:279px;width:51.6px;height:35px">916,85</div>
<div class="c r" style="left:672.7px;top:279px;width:71.6px;height:35px">911,65</div>
<div class="c r" style="left:750.7px;top:279px;width:30.6px;height:35px">10,00</div>
<div class="c r" style="left:787.7px;top:279px;width:50.6px;height:35px">91,15</div>
<div class="c r" style="left:844.7px;top:279px;width:51.6px;height:35px">1 002,80</div>
<div class="c r" style="left:902.7px;top:279px;width:26.6px;height:35px">4,98</div>
<div class="c r" style="left:935.7px;top:279px;width:45.6px;height:35px">45,38</div>
<div class="c r" style="left:987.7px;top:279px;width:63.6px;height:35px">1 153,00</div>
<div class="c r" style="left:1057.7px;top:279px;width:52.6px;height:35px">1 153,00</div>
<div class="c r" style="left:1116.7px;top:279px;width:56.6px;height:35px">1 260,66</div>
<div class="c r" style="left:3px;top:315px;width:35px;height:36px">17</div>
<div class="c l" style="left:43px;top:314.5px;width:124px;height:36px">Гидрокортизон мазь глазн
0.5% туба 3г N1
4605589535606</div>
<div class="c l" style="left:172px;top:314.5px;width:53px;height:36px">ПРОТЕК
Фирма ЦВ
ЗАО</div>
<div class="c l" style="left:230.7px;top:314.5px;width:51.6px;height:36px">345394838/
0</div>
<div class="c l" style="left:288px;top:315px;width:53px;height:36px">01.02.2019</div>
<div class="c l" style="left:346.3px;top:315px;width:39.4px;height:36px">805062</div>
<div class="c l" style="left:391px;top:315px;width:73px;height:36px">Jelfa SA</div>
<div class="c r" style="left:469.7px;top:315px;width:51.6px;height:36px">102,70</div>
<div class="c r" style="left:672.7px;top:315px;width:71.6px;height:36px">102,30</div>
<div class="c r" style="left:750.7px;top:315px;width:30.6px;height:36px">14,98</div>
<div class="c r" style="left:787.7px;top:315px;width:50.6px;height:36px">15,33</div>
<div class="c r" style="left:844.7px;top:315px;width:51.6px;height:36px">117,63</div>
<div class="c r" style="left:902.7px;top:315px;width:26.6px;height:36px">12,98</div>
<div class="c r" style="left:935.7px;top:315px;width:45.6px;height:36px">13,28</div>
<div class="c r" style="left:987.7px;top:315px;width:63.6px;height:36px">144,00</div>
<div class="c r" style="left:1057.7px;top:315px;width:52.6px;height:36px">144,00</div>
<div class="c r" style="left:1116.7px;top:315px;width:56.6px;height:36px">161,54</div>
<div class="c r" style="left:3px;top:352px;width:35px;height:35px">1</div>
<div class="c l" style="left:43px;top:351.5px;width:124px;height:35px">Креон 25000
капс.кишечнораств.№50
4605589533718</div>
<div class="c l" style="left:172px;top:351.5px;width:53px;height:35px">ПРОТЕК
Фирма ЦВ
ЗАО</div>
<div class="c l" style="left:230.7px;top:351.5px;width:51.6px;height:35px">345394838/
0</div>
<div class="c l" style="left:288px;top:352px;width:53px;height:35px">01.02.2019</div>
<div class="c l" style="left:346.3px;top:352px;width:39.4px;height:35px">56677</div>
<div class="c l" style="left:391px;top:351.5px;width:73px;height:35px">Abbott
Laboratories
GmbH DE</div>
<div class="c r" style="left:469.7px;top:352px;width:51.6px;height:35px">1 110,75</div>
<div class="c r" style="left:672.7px;top:352px;width:71.6px;height:35px">1 107,74</div>
<div class="c r" style="left:750.7px;top:352px;width:30.6px;height:35px">4,45</div>
<div class="c r" style="left:787.7px;top:352px;width:50.6px;height:35px">49,31</div>
<div class="c r" style="left:844.7px;top:352px;width:51.6px;height:35px">1 157,05</div>
<div class="c r" style="left:902.7px;top:352px;width:26.6px;height:35px">10,52</div>
<div class="c r" style="left:935.7px;top:352px;width:45.6px;height:35px">116,58</div>
<div class="c r" style="left:987.7px;top:352px;width:63.6px;height:35px">1 401,00</div>
<div class="c r" style="left:1057.7px;top:352px;width:52.6px;height:35px">1 391,00</div>
<div class="c r" style="left:1116.7px;top:352px;width:56.6px;height:35px">1 527,28</div>
<div class="c r" style="left:3px;top:388px;width:35px;height:35px">11</div>
<div class="c l" style="left:43px;top:387.5px;width:124px;height:35px">Тобрисс капли глазн 0.3%
фл 5мл N1 4605589534845</div>
<div class="c l" style="left:172px;top:387.5px;width:53px;height:35px">ПРОТЕК
Фирма ЦВ
ЗАО</div>
<div class="c l" style="left:230.7px;top:387.5px;width:51.6px;height:35px">345394838/
0</div>
<div class="c l" style="left:288px;top:388px;width:53px;height:35px">01.02.2019</div>
<div class="c l" style="left:346.3px;top:388px;width:39.4px;height:35px">E18013</div>
<div class="c l" style="left:391px;top:387.5px;width:73px;height:35px">Сентисс Фарма
Пвт. Лтд.</div>
<div class="c r" style="left:469.7px;top:388px;width:51.6px;height:35px">139,00</div>
<div class="c r" style="left:672.7px;top:388px;width:71.6px;height:35px">132,05</div>
<div class="c r" style="left:750.7px;top:388px;width:30.6px;height:35px">15,00</div>
<div class="c r" style="left:787.7px;top:388px;width:50.6px;height:35px">19,80</div>
<div class="c r" style="left:844.7px;top:388px;width:51.6px;height:35px">151,85</div>
<div class="c r" style="left:902.7px;top:388px;width:26.6px;height:35px">12,36</div>
<div class="c r" style="left:935.7px;top:388px;width:45.6px;height:35px">16,33</div>
<div class="c r" style="left:987.7px;top:388px;width:63.6px;height:35px">185,00</div>
<div class="c r" style="left:1057.7px;top:388px;width:52.6px;height:35px">185,00</div>
<div class="c r" style="left:1116.7px;top:388px;width:56.6px;height:35px">218,64</div>
<div class="c r" style="left:3px;top:424px;width:35px;height:35px">43</div>
<div class="c l" style="left:43px;top:423.5px;width:124px;height:35px">Вермокс табл. 100 мг. №6
4605591187404</div>
<div class="c l" style="left:172px;top:423.5px;width:53px;height:35px">ПРОТЕК
Фирма ЦВ
ЗАО</div>
<div class="c l" style="left:230.7px;top:423.5px;width:51.6px;height:35px">345534830/
7</div>
<div class="c l" style="left:288px;top:424px;width:53px;height:35px">02.02.2019</div>
<div class="c l" style="left:346.3px;top:423.5px;width:39.4px;height:35px">F8B100
A</div>
<div class="c l" style="left:391px;top:423.5px;width:73px;height:35px">Гедеон Рихтер
Румыния А.О.</div>
<div class="c r" style="left:469.7px;top:424px;width:51.6px;height:35px">71,20</div>
<div class="c r" style="left:672.7px;top:424px;width:71.6px;height:35px">71,05</div>
<div class="c r" style="left:750.7px;top:424px;width:30.6px;height:35px">14,98</div>
<div class="c r" style="left:787.7px;top:424px;width:50.6px;height:35px">10,64</div>
<div class="c r" style="left:844.7px;top:424px;width:51.6px;height:35px">81,69</div>
<div class="c r" style="left:902.7px;top:424px;width:26.6px;height:35px">12,97</div>
<div class="c r" style="left:935.7px;top:424px;width:45.6px;height:35px">9,22</div>
<div class="c r" style="left:987.7px;top:424px;width:63.6px;height:35px">100,00</div>
<div class="c r" style="left:1057.7px;top:424px;width:52.6px;height:35px">100,00</div>
<div class="c r" style="left:1116.7px;top:424px;width:56.6px;height:35px">111,99</div>
<div class="c r" style="left:3px;top:460px;width:35px;height:35px">14</div>
<div class="c l" style="left:43px;top:459.5px;width:124px;height:35px">Гептрал таб.п.кш.о.500мг
№20 4605591183383</div>
<div class="c l" style="left:172px;top:459.5px;width:53px;height:35px">ПРОТЕК
Фирма ЦВ
ЗАО</div>
<div class="c l" style="left:230.7px;top:459.5px;width:51.6px;height:35px">345534830/
7</div>
<div class="c l" style="left:288px;top:460px;width:53px;height:35px">02.02.2019</div>
<div class="c l" style="left:346.3px;top:460px;width:39.4px;height:35px">1086659</div>
<div class="c l" style="left:391px;top:459.5px;width:73px;height:35px">Эбботт С.р.Л./
Эббви С.р.Л.</div>
<div class="c r" style="left:469.7px;top:460px;width:51.6px;height:35px">1 693,69</div>
<div class="c r" style="left:672.7px;top:460px;width:71.6px;height:35px">1 628,25</div>
<div class="c r" style="left:750.7px;top:460px;width:30.6px;height:35px">10,00</div>
<div class="c r" style="left:787.7px;top:460px;width:50.6px;height:35px">162,81</div>
<div class="c r" style="left:844.7px;top:460px;width:51.6px;height:35px">1 791,06</div>
<div class="c r" style="left:902.7px;top:460px;width:26.6px;height:35px">--</div>
<div class="c r" style="left:935.7px;top:460px;width:45.6px;height:35px">--</div>
<div class="c r" style="left:987.7px;top:460px;width:63.6px;height:35px">1 500,00</div>
<div class="c r" style="left:1057.7px;top:460px;width:52.6px;height:35px">1 500,00</div>
<div class="c r" style="left:1116.7px;top:460px;width:56.6px;height:35px">2 328,82</div>
<div class="c l" style="left:43px;top:495.5px;width:124px;height:35px">Глицин таб.подъяз.100мг
 </div>
<div class="c l" style="left:172px;top:495.5px;width:53px;height:35px">ПРОТЕК
Фирма ЦВ
ЗАО</div>
<div class="c l" style="left:230.7px;top:495.5px;width:51.6px;height:35px">345534830/
7</div>
<div class="c l" style="left:391px;top:495.5px;width:73px;height:35px">ООО Биотики
 </div>
</div>
<svg class="a" style="left:370px;top:235px" width="70" height="516" viewBox="0 0 70 516"><rect x="5.1" y="5.2" width="57.7" height="504.8" fill="none" stroke="#e8151f" stroke-width="3.8"/></svg>
<svg class="a" style="left:211.5px;top:746.5px" width="4" height="6" viewBox="0 0 4 6"><path d="M4 0L0 3L4 6Z" fill="#444"/></svg>
<div class="a" style="left:223px;top:747px;width:1148px;height:5.5px;border-radius:3px;background:#d9d9d9"></div>
<div class="a" style="left:239px;top:747px;width:1081px;height:5.5px;border-radius:3px;background:#a2a2a2"></div>
<svg class="a" style="left:1378px;top:746.5px" width="4" height="6" viewBox="0 0 4 6"><path d="M0 0L4 3L0 6Z" fill="#444"/></svg>
<div class="a" style="left:1390px;top:207px;width:6px;height:520px;border-radius:3px;background:#d9d9d9"></div>
<div class="a" style="left:1390px;top:208px;width:6px;height:20.5px;border-radius:3px;background:#a4a4a4"></div>
<svg class="a" style="left:1390.5px;top:197px" width="5" height="3.5" viewBox="0 0 5 3.5"><path d="M0 3.5H5L2.5 0Z" fill="#bdbdbd"/></svg>
<svg class="a" style="left:1390.5px;top:734.5px" width="5" height="3.5" viewBox="0 0 5 3.5"><path d="M0 0H5L2.5 3.5Z" fill="#444"/></svg>
</body></html>
